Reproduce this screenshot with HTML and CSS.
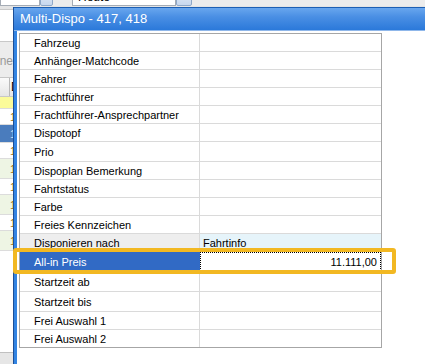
FILE: index.html
```html
<!DOCTYPE html>
<html lang="de">
<head>
<meta charset="utf-8">
<title>Multi-Dispo</title>
<link rel="stylesheet" href="styles.css">
</head>
<body>
<div class="app">
  <div class="topbar">
    <div class="combo c1"></div><div class="dd"></div>
    <div class="combo c2">Heute</div><div class="dd dd2"></div>
  </div>
  <div class="sep"></div>
  <div class="panel"></div>
  <div class="tabs"><span class="tabtext">Optionen</span></div>
  <div class="ghead"><span class="hcell"></span><span class="htext">D</span></div>
  <div class="grow yellow"></div>
  <div class="grow"><span class="num">1</span></div>
  <div class="grow sel"><span class="num">1</span></div>
  <div class="grow"><span class="num">1</span></div>
  <div class="grow green"><span class="num">1</span></div>
  <div class="grow"><span class="num">1</span></div>
  <div class="grow green"><span class="num">1</span></div>
  <div class="grow"><span class="num">1</span></div>
  <div class="grow green"><span class="num">1</span></div>
  <div class="empty"></div>
  <div class="bottombar"></div>
</div>

<div class="dialog">
  <div class="titlebar">Multi-Dispo - 417, 418</div>
  <div class="body">
    <div class="props">
      <div class="row"><div class="lbl">Fahrzeug</div><div class="val"></div></div>
      <div class="row"><div class="lbl">Anhänger-Matchcode</div><div class="val"></div></div>
      <div class="row"><div class="lbl">Fahrer</div><div class="val"></div></div>
      <div class="row"><div class="lbl">Frachtführer</div><div class="val"></div></div>
      <div class="row"><div class="lbl">Frachtführer-Ansprechpartner</div><div class="val"></div></div>
      <div class="row"><div class="lbl">Dispotopf</div><div class="val"></div></div>
      <div class="row tall"><div class="lbl">Prio</div><div class="val"></div></div>
      <div class="row"><div class="lbl">Dispoplan Bemerkung</div><div class="val"></div></div>
      <div class="row"><div class="lbl">Fahrtstatus</div><div class="val"></div></div>
      <div class="row"><div class="lbl">Farbe</div><div class="val"></div></div>
      <div class="row"><div class="lbl">Freies Kennzeichen</div><div class="val"></div></div>
      <div class="row changed"><div class="lbl">Disponieren nach</div><div class="val">Fahrtinfo</div></div>
      <div class="row tall selected"><div class="lbl">All-in Preis</div><div class="val num-val">11.111,00</div></div>
      <div class="row tall"><div class="lbl">Startzeit ab</div><div class="val"></div></div>
      <div class="row tall"><div class="lbl">Startzeit bis</div><div class="val"></div></div>
      <div class="row"><div class="lbl">Frei Auswahl 1</div><div class="val"></div></div>
      <div class="row"><div class="lbl">Frei Auswahl 2</div><div class="val"></div></div>
    </div>
  </div>
</div>

<div class="highlight"></div>
</body>
</html>
```

FILE: styles.css
```css
html, body {
  margin: 0;
  padding: 0;
}
body {
  width: 425px;
  height: 364px;
  overflow: hidden;
  position: relative;
  background: #ececec;
  font-family: "Liberation Sans", Arial, sans-serif;
  font-size: 11px;
  color: #000;
}

/* background application */
.app {
  display: flex;
  flex-direction: column;
  width: 425px;
  height: 364px;
  overflow: hidden;
}
.topbar {
  height: 6px;
  display: flex;
  align-items: flex-end;
  background: #ececec;
  overflow: hidden;
}
.combo {
  height: 18px;
  background: #fff;
  border: 1px solid #a5acb5;
  box-sizing: border-box;
  flex: none;
}
.c1 { width: 40px; }
.c2 {
  width: 104px;
  margin-left: 19px;
  padding-left: 5px;
  line-height: 16px;
  font-size: 12px;
  overflow: hidden;
}
.dd {
  width: 13px;
  height: 18px;
  flex: none;
  box-sizing: border-box;
  border: 1px solid #8fa8c8;
  border-radius: 2px;
  background: linear-gradient(#e8eef8, #c8d8ee);
}
.dd2 { width: 16px; }
.sep {
  height: 3px;
  background: #e4e4e4;
}
.panel {
  height: 33px;
  background: #fff;
  border-top: 1px solid #c8c8c8;
  border-bottom: 1px solid #c8c8c8;
  box-sizing: border-box;
}
.tabs {
  height: 36px;
  background: #ececec;
  border-bottom: 1px solid #c6c6c6;
  box-sizing: border-box;
  overflow: hidden;
}
.tabtext {
  display: block;
  margin-left: -29px;
  margin-top: 12px;
  color: #9a9a9a;
  font-size: 12px;
  white-space: nowrap;
}
.ghead {
  height: 19px;
  display: flex;
  background: linear-gradient(#fafafa, #e6e6e6);
  border-bottom: 1px solid #c8c8c8;
  box-sizing: border-box;
}
.hcell {
  width: 9px;
  border-right: 1px solid #b8b8b8;
}
.htext {
  padding-left: 1px;
  line-height: 18px;
  font-size: 12px;
}
.grow {
  height: 16px;
  background: #fff;
  border-bottom: 1px solid #dcdcdc;
  box-sizing: border-box;
  display: flex;
  align-items: center;
}
.grow.yellow { height: 12px; background: #fbfb9a; }
.grow.sel { height: 18px; background: #4a7cbd; }
.grow.green { height: 20px; background: #eef5e4; }
.grow .num {
  margin-left: 10px;
  color: #a07020;
  font-size: 11px;
}
.grow.sel .num { color: #dde6f5; }
.empty {
  flex: 1;
  background: #fff;
}
.bottombar {
  height: 11px;
  background: #e6e6e6;
  border-top: 1px solid #c0c0c0;
}

/* dialog window */
.dialog {
  position: absolute;
  left: 13px;
  top: 7px;
  width: 412px;
  height: 357px;
  overflow: hidden;
  border-left: 1px solid #1c4f98;
  box-sizing: border-box;
  background: #fff;
}
.titlebar {
  height: 24px;
  box-sizing: border-box;
  border-top: 1px solid #1d5fb3;
  border-bottom: 1px solid #8fb7ea;
  background: linear-gradient(#68a6ee 0%, #4a8fe4 40%, #2b79da 100%);
  color: #fff;
  font-size: 13px;
  line-height: 22px;
  padding-left: 6px;
  white-space: nowrap;
}
.body {
  height: 333px;
  border-left: 3px solid #3384e2;
  padding: 2px 0 0 2px;
  background: #fff;
}

.props {
  width: 363px;
  box-sizing: border-box;
  border: 1px solid #a6a6a6;
}
.row {
  display: grid;
  grid-template-columns: 180px 181px;
  height: 18px;
  border-bottom: 1px solid #dadada;
  box-sizing: border-box;
}
.row:last-child {
  border-bottom: none;
  height: 17px;
}
.row.tall { height: 20px; }
.lbl {
  border-right: 1px solid #dadada;
  padding-left: 14px;
  display: flex;
  align-items: center;
  white-space: nowrap;
  color: #000;
}
.val {
  padding-left: 3px;
  display: flex;
  align-items: center;
  white-space: nowrap;
}
.row.changed .lbl { background: #eeeeee; }
.row.changed .val { background: #e6f4fa; }
.row.selected .lbl {
  background: #316ac5;
  color: #fff;
  border-right-color: #316ac5;
}
.row.selected .val {
  outline: 1px dotted #000;
  outline-offset: -1px;
  justify-content: flex-end;
  padding-right: 4px;
}

.highlight {
  position: absolute;
  left: 13px;
  top: 248px;
  width: 383px;
  height: 26px;
  box-sizing: border-box;
  border: 4px solid #f2b822;
  border-radius: 3px;
}
```
